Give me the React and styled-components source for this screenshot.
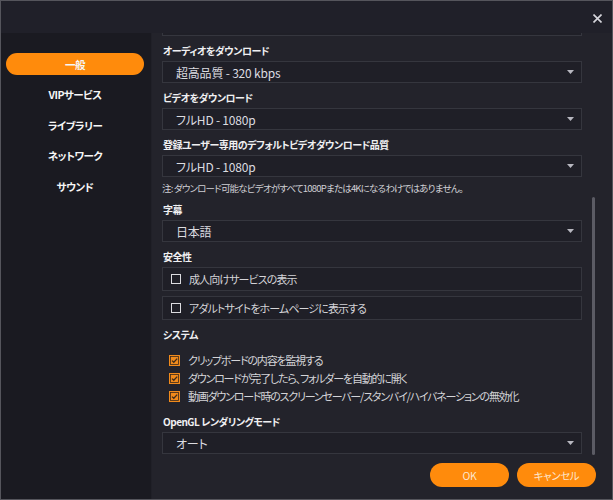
import React from "react"
import styled, { createGlobalStyle } from "styled-components"

const GlobalStyle = createGlobalStyle`
  html, body {
    margin: 0;
    padding: 0;
    background: #23232b;
  }
  * { box-sizing: border-box; }
`

const menu = ["一般", "VIPサービス", "ライブラリー", "ネットワーク", "サウンド"]

const checks = [
  "クリップボードの内容を監視する",
  "ダウンロードが完了したら、フォルダーを自動的に開く",
  "動画ダウンロード時のスクリーンセーバー/スタンバイ/ハイバネーションの無効化",
]

function Caret() {
  return (
    <svg width="7" height="4" viewBox="0 0 7 4">
      <path d="M0 0 H7 L3.5 4 Z" fill="#b8b8c0" />
    </svg>
  )
}

function Select({ value }) {
  return (
    <SelectBox>
      <span>{value}</span>
      <Caret />
    </SelectBox>
  )
}

function CheckedIcon() {
  return (
    <svg width="11" height="11" viewBox="0 0 11 11">
      <rect x="0" y="0" width="11" height="11" fill="#f08a1c" />
      <rect x="1.5" y="1.5" width="8" height="8" fill="none" stroke="#3b2a1c" strokeWidth="0.8" />
      <path d="M3 5.6 L4.8 7.3 L8.2 3.6" fill="none" stroke="#3b2a1c" strokeWidth="1.3" />
    </svg>
  )
}

export default function App() {
  return (
    <>
      <GlobalStyle />
      <Window>
        <TitleBar>
          <CloseButton>
            <svg width="9" height="9" viewBox="0 0 9 9">
              <path d="M0.5 0.5 L8.5 8.5 M8.5 0.5 L0.5 8.5" stroke="#d6d6dc" strokeWidth="1.6" />
            </svg>
          </CloseButton>
        </TitleBar>
        <Body>
          <Sidebar>
            {menu.map((m, i) => (
              <NavItem key={m} $active={i === 0}>{m}</NavItem>
            ))}
          </Sidebar>
          <Main>
            <ScrollArea>
              <CutBox />
              <Label>オーディオをダウンロード</Label>
              <Select value="超高品質 - 320 kbps" />
              <Label>ビデオをダウンロード</Label>
              <Select value="フルHD - 1080p" />
              <Label>登録ユーザー専用のデフォルトビデオダウンロード品質</Label>
              <Select value="フルHD - 1080p" />
              <Note>注: ダウンロード可能なビデオがすべて1080Pまたは4Kになるわけではありません。</Note>
              <Label>字幕</Label>
              <Select value="日本語" />
              <Label>安全性</Label>
              <BoxList>
                <BoxRow><EmptyCheck />成人向けサービスの表示</BoxRow>
                <BoxRow><EmptyCheck />アダルトサイトをホームページに表示する</BoxRow>
              </BoxList>
              <Label>システム</Label>
              <CheckList>
                {checks.map((c) => (
                  <CheckRow key={c}><CheckedIcon />{c}</CheckRow>
                ))}
              </CheckList>
              <Label>OpenGL レンダリングモード</Label>
              <Select value="オート" />
            </ScrollArea>
            <ScrollThumb />
            <Footer>
              <Button>OK</Button>
              <Button>キャンセル</Button>
            </Footer>
          </Main>
        </Body>
      </Window>
    </>
  )
}

const font = `"Noto Sans CJK JP", "Noto Sans", sans-serif`

const Window = styled.div`
  width: 613px;
  height: 500px;
  border: 1px solid #55555c;
  display: flex;
  flex-direction: column;
  font-family: ${font};
  font-feature-settings: "palt";
  overflow: hidden;
`

const TitleBar = styled.div`
  height: 32px;
  background: #202029;
  display: flex;
  align-items: center;
  justify-content: flex-end;
  padding-right: 10px;
`

const CloseButton = styled.div`
  width: 9px;
  height: 9px;
  display: flex;
  margin-top: 2px;
`

const Body = styled.div`
  flex: 1;
  display: flex;
  min-height: 0;
`

const Sidebar = styled.div`
  width: 151px;
  background: #1a1a21;
  border-right: 1px solid #202028;
  padding: 20px 0 0 5px;
  display: flex;
  flex-direction: column;
  gap: 8.5px;
`

const NavItem = styled.div`
  width: 138px;
  height: 22px;
  border-radius: 11px;
  display: flex;
  align-items: center;
  justify-content: center;
  font-size: 10.5px;
  font-weight: 700;
  letter-spacing: -0.5px;
  color: #f6f6f6;
  background: ${(p) => (p.$active ? "#ff8b0c" : "transparent")};
`

const Main = styled.div`
  flex: 1;
  background: #23232b;
  display: flex;
  flex-direction: column;
  position: relative;
`

const ScrollArea = styled.div`
  height: 422px;
  overflow: hidden;
  padding: 0 30px 0 10px;
  display: flex;
  flex-direction: column;
`

const CutBox = styled.div`
  flex: none;
  height: 22px;
  margin-top: -19px;
  border: 1px solid #35363e;
  background: #1f1f27;
`

const Label = styled.div`
  padding: 8px 0 3px 1px;
  line-height: 14px;
  font-size: 10px;
  font-weight: 700;
  letter-spacing: -0.5px;
  color: #f0f0f2;
`

const SelectBox = styled.div`
  flex: none;
  height: 22px;
  border: 1px solid #35363e;
  background: #1f1f27;
  display: flex;
  align-items: center;
  justify-content: space-between;
  padding: 0 7px 0 13px;
  font-size: 12px;
  letter-spacing: -0.2px;
  color: #dcdce0;
`

const Note = styled.div`
  margin-top: 4px;
  line-height: 14px;
  font-size: 9.5px;
  letter-spacing: -0.8px;
  color: #cfcfd4;
`

const BoxList = styled.div`
  display: flex;
  flex-direction: column;
  gap: 5px;
`

const BoxRow = styled.div`
  height: 24px;
  border: 1px solid #35363e;
  background: #1f1f27;
  display: flex;
  align-items: center;
  gap: 7px;
  padding-left: 8px;
  font-size: 11px;
  letter-spacing: -0.9px;
  color: #d4d4d8;
`

const EmptyCheck = styled.span`
  width: 10px;
  height: 10px;
  border: 1.5px solid #dcdce0;
  flex: none;
  margin-right: 1px;
`

const CheckList = styled.div`
  display: flex;
  flex-direction: column;
  padding: 6px 0 2px 7px;
`

const CheckRow = styled.div`
  height: 18px;
  display: flex;
  align-items: center;
  gap: 8px;
  font-size: 11px;
  letter-spacing: -1.2px;
  color: #d4d4d8;
`

const ScrollThumb = styled.div`
  position: absolute;
  right: 17px;
  top: 164px;
  width: 3px;
  height: 258px;
  border-radius: 2px;
  background: #5b5b64;
`

const Footer = styled.div`
  flex: 1;
  display: flex;
  justify-content: flex-end;
  align-items: flex-start;
  gap: 8px;
  padding: 8px 16px 0 0;
`

const Button = styled.div`
  width: 79px;
  height: 24px;
  border-radius: 12px;
  background: #ff8b0c;
  color: #fde6cc;
  font-size: 10.5px;
  letter-spacing: -0.4px;
  display: flex;
  align-items: center;
  justify-content: center;
`
